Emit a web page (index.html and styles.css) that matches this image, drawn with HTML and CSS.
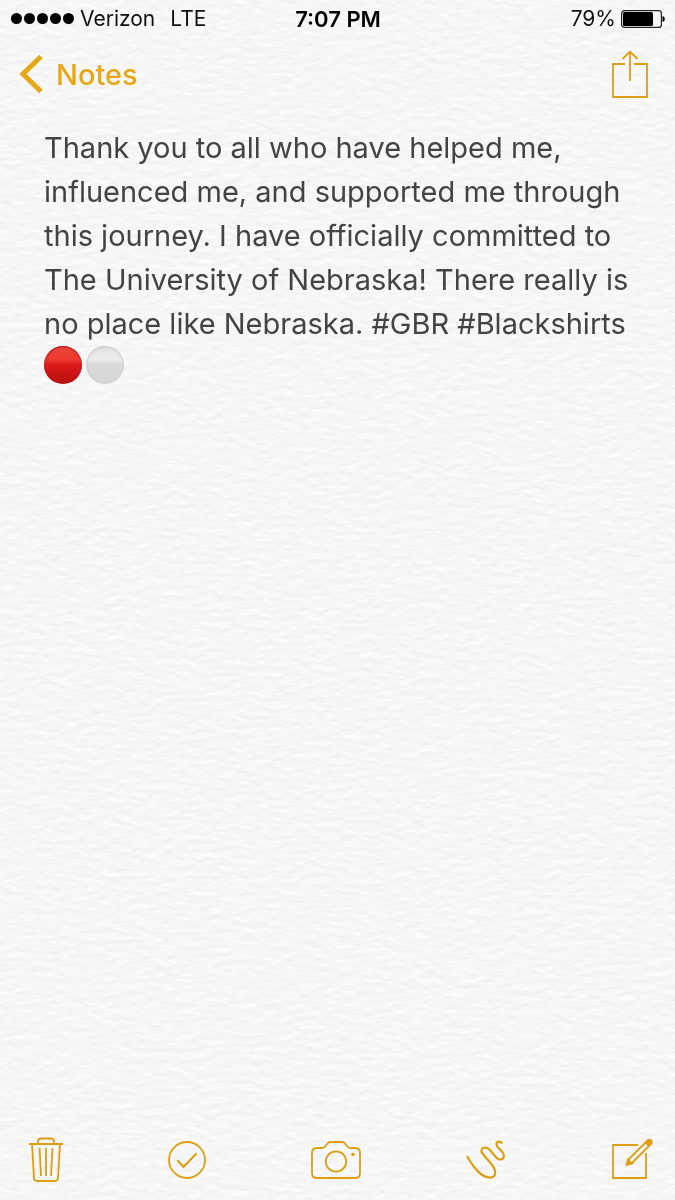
FILE: index.html
```
<!DOCTYPE html>
<html lang="en">
<head>
  <meta charset="UTF-8" />
  <meta name="viewport" content="width=device-width, initial-scale=1.0"/>
  <title>Notes</title>
  <link rel="stylesheet" href="styles.css">
</head>
<body>
  <!-- Paper grain behind everything -->
  <svg class="paper" aria-hidden="true">
    <filter id="grain" x="0" y="0" width="100%" height="100%" color-interpolation-filters="sRGB">
      <feTurbulence type="fractalNoise" baseFrequency="0.08 0.16" numOctaves="3" seed="4" result="noise"/>
      <feDiffuseLighting in="noise" lighting-color="#fff" surfaceScale="0.15" diffuseConstant="1.115">
        <feDistantLight azimuth="270" elevation="60"/>
      </feDiffuseLighting>
    </filter>
    <rect width="100%" height="100%" filter="url(#grain)"/>
  </svg>

  <div class="status-bar">
    <div class="carrier">
      <span class="signal"><i></i><i></i><i></i><i></i><i></i></span>
      <span>Verizon</span>
      <span class="network">LTE</span>
    </div>
    <div class="time">7:07 PM</div>
    <div class="power">
      <span>79%</span>
      <svg width="44" height="18" viewBox="0 0 44 18" aria-hidden="true">
        <rect x="0.6" y="0.6" width="39.8" height="16.8" rx="3" fill="none" stroke="#222" stroke-width="1.2"/>
        <rect x="2" y="2" width="30" height="14" rx="1.5" fill="#000"/>
        <path d="M41.5 6 C44.5 6.5 44.5 11.5 41.5 12 Z" fill="#000"/>
      </svg>
    </div>
  </div>

  <header class="nav-bar">
    <a class="back" href="#">
      <svg width="24" height="38" viewBox="0 0 24 38" aria-hidden="true">
        <path d="M22 1.5 L4 19 L22 36.5" fill="none" stroke="#e6a817" stroke-width="5"/>
      </svg>
      <span>Notes</span>
    </a>
    <button class="icon-button" aria-label="Share">
      <svg width="36" height="48" viewBox="0 0 36 48">
        <path d="M13 14 H1 V47 H35 V14 H22"/>
        <path d="M18 31 V2 M10.5 9 L18 1.5 L25.5 9"/>
      </svg>
    </button>
  </header>

  <main class="note">
    <p>Thank you to all who have helped me, influenced me, and supported me through this journey. I have officially committed to The University of Nebraska! There really is no place like Nebraska. #GBR #Blackshirts</p>
    <div class="circles">
      <span class="circle red" role="img" aria-label="red circle"></span>
      <span class="circle white" role="img" aria-label="white circle"></span>
    </div>
  </main>

  <footer class="toolbar">
    <button class="icon-button" aria-label="Delete">
      <svg width="34" height="46" viewBox="0 0 34 46">
        <path d="M0 7 H34"/>
        <path d="M9 7 V4.5 Q9 1.5 12 1.5 H22 Q25 1.5 25 4.5 V7"/>
        <path d="M3 7 L5 41 Q5.2 44 8 44 H26 Q28.8 44 29 41 L31 7"/>
        <path d="M10.5 11 L12 39 M17 11 V39 M23.5 11 L22 39"/>
      </svg>
    </button>
    <button class="icon-button" aria-label="Checklist">
      <svg width="38" height="38" viewBox="0 0 38 38">
        <circle cx="19" cy="19" r="18"/>
        <path class="tick" d="M10 20 L15.5 26 L28 13"/>
      </svg>
    </button>
    <button class="icon-button" aria-label="Camera">
      <svg width="50" height="38" viewBox="0 0 50 38">
        <path d="M1 12 Q1 7 6 7 H11 Q13 7 14.5 5 L16.500 2.500 Q17.500 1 19.500 1 H31 Q33 1 34 2.500 L36 5 Q37.500 7 39.500 7 H44 Q49 7 49 12 V32 Q49 37 44 37 H6 Q1 37 1 32 Z"/>
        <circle cx="25" cy="20.5" r="10.2"/>
        <circle class="dot" cx="42" cy="13.500" r="0.8"/>
      </svg>
    </button>
    <button class="icon-button" aria-label="Sketch">
      <svg width="40" height="40" viewBox="0 0 40 40">
        <path class="scribble" d="M1.500 17 C7 26 14.500 37.500 24 37.500 C29 37.500 30.500 33.500 28 28 C25 21.500 16 15 15.500 11.500 C15 7.500 20 6 24 10 C28 14 30 19.500 34 19.500 C38 19.500 38.500 16 37 13 C35 9.500 30.500 7.500 30.500 4 C30.500 1 35 .8 35.500 3"/>
      </svg>
    </button>
    <button class="icon-button" aria-label="New note">
      <svg width="42" height="44" viewBox="0 0 42 44">
        <path d="M27 7 H2 V40 H35 V15"/>
        <path d="M17 22 L34.500 4.500 L38 8 L20.500 25.500"/>
        <path class="solid" d="M15.500 27 L17 21.500 L21 25.500 Z"/>
        <path class="solid" d="M35 4 L37 2 Q38.500 1 40 2.500 Q41.500 4 40.500 5.500 L38.500 7.500 Z"/>
      </svg>
    </button>
  </footer>
</body>
</html>
```
FILE: styles.css
```
* {
  box-sizing: border-box;
}
body {
  margin: 0;
  min-height: 100vh;
  display: flex;
  flex-direction: column;
  background-color: #f6f6f6;
  color: #434343;
  font-family: Inter, "Liberation Sans", sans-serif;
}
.paper {
  position: fixed;
  top: 0;
  left: 0;
  width: 100%;
  height: 100%;
  z-index: -1;
}
.status-bar {
  display: grid;
  grid-template-columns: 1fr auto 1fr;
  align-items: center;
  height: 37px;
  padding: 0 10px 0 11px;
  color: #111;
  font-size: 21px;
}
.carrier, .power {
  display: flex;
  align-items: center;
}
.signal {
  display: flex;
  gap: 2px;
  margin-right: 6px;
}
.signal i {
  width: 11px;
  height: 11px;
  border-radius: 50%;
  background-color: #000;
}
.network {
  margin-left: 15px;
}
.time {
  color: #000;
  font-size: 22px;
  font-weight: 600;
}
.power {
  justify-content: flex-end;
  gap: 5px;
}
.nav-bar {
  display: flex;
  justify-content: space-between;
  align-items: center;
  height: 74px;
  padding: 0 27px 0 19px;
}
.back {
  display: flex;
  align-items: center;
  gap: 13px;
  color: #e6a817;
  font-size: 29px;
  font-weight: 500;
  text-decoration: none;
}
.icon-button {
  display: block;
  padding: 0;
  border: 0;
  background: none;
  cursor: pointer;
}
.icon-button svg {
  display: block;
  fill: none;
  stroke: #dc9f14;
  stroke-width: 1.8;
}
.icon-button .tick,
.icon-button .scribble {
  stroke-width: 2.2;
  stroke-linecap: round;
}
.icon-button .solid,
.icon-button .dot {
  fill: #dc9f14;
}
.note {
  flex: 1;
  padding: 15px 40px 0 44px;
  font-size: 29px;
  line-height: 44px;
}
.note p {
  margin: 0;
}
.circles {
  display: flex;
  gap: 4px;
}
.circle {
  width: 38px;
  height: 38px;
  border-radius: 50%;
}
.red {
  background: linear-gradient(#e8463c, #ee3a30 35%, #dc1a1a 50%, #b80d10);
  box-shadow: inset 0 1px 2px #a81414;
}
.white {
  background: linear-gradient(#e2e2e2, #ececec 35%, #dadada 50%, #d6d6d6);
  box-shadow: inset 0 1px 3px #c4c4c4;
}
.toolbar {
  display: flex;
  justify-content: space-between;
  align-items: center;
  height: 80px;
  padding: 0 22px 0 29px;
}
```
